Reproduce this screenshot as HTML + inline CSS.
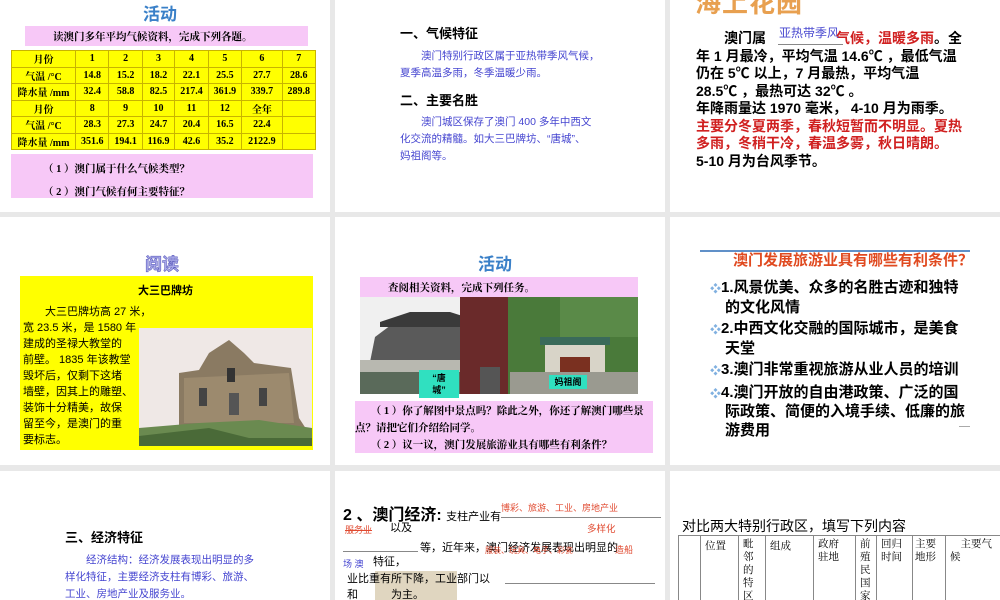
<!DOCTYPE html>
<html><head><meta charset="utf-8"><style>
*{margin:0;padding:0;box-sizing:border-box}
body{width:1000px;height:600px;background:#e8e8e8;position:relative;overflow:hidden;font-family:"Liberation Sans","Noto Sans CJK SC",sans-serif}
.p{position:absolute;background:#fff;overflow:hidden}
.a{position:absolute;white-space:nowrap}
.serif{font-family:"Liberation Serif","Noto Serif CJK SC",serif}
table.t{position:absolute;border-collapse:collapse;background:#ffff00;font-family:"Liberation Serif","Noto Serif CJK SC",serif;font-weight:bold;font-size:10px}
table.t td{border:1px solid #c8b400;height:16.5px;text-align:center;padding:0}
.blue{color:#4545d0}
.red{color:#d02020}
</style></head><body>

<!-- Row1 Panel1 -->
<div class="p" style="left:0;top:0;width:330px;height:212px">
 <div class="a" style="left:143px;top:0;font-size:17px;color:#3a80c8;font-weight:bold">活动</div>
 <div class="a serif" style="left:25px;top:26px;width:283px;height:20px;background:#f7c8f7;font-size:10.5px;font-weight:bold;padding:3px 0 0 28px">读澳门多年平均气候资料，完成下列各题。</div>
 <table class="t" style="left:11px;top:50px;width:305px">
  <tr><td style="width:64px">月份</td><td>1</td><td>2</td><td>3</td><td>4</td><td>5</td><td>6</td><td>7</td></tr>
  <tr><td>气温 /°C</td><td>14.8</td><td>15.2</td><td>18.2</td><td>22.1</td><td>25.5</td><td>27.7</td><td>28.6</td></tr>
  <tr><td>降水量 /mm</td><td>32.4</td><td>58.8</td><td>82.5</td><td>217.4</td><td>361.9</td><td>339.7</td><td>289.8</td></tr>
  <tr><td>月份</td><td>8</td><td>9</td><td>10</td><td>11</td><td>12</td><td>全年</td><td></td></tr>
  <tr><td>气温 /°C</td><td>28.3</td><td>27.3</td><td>24.7</td><td>20.4</td><td>16.5</td><td>22.4</td><td></td></tr>
  <tr><td>降水量 /mm</td><td>351.6</td><td>194.1</td><td>116.9</td><td>42.6</td><td>35.2</td><td>2122.9</td><td></td></tr>
 </table>
 <div class="a serif" style="left:11px;top:154px;width:302px;height:44px;background:#f7c8f7;font-size:10.5px;font-weight:bold;padding:4px 0 0 32px;line-height:23px">（ 1 ）澳门属于什么气候类型？<br>（ 2 ）澳门气候有何主要特征？</div>
</div>

<!-- Row1 Panel2 -->
<div class="p" style="left:335px;top:0;width:330px;height:212px">
 <div class="a" style="left:65px;top:23px;font-size:13px;font-weight:bold">一、气候特征</div>
 <div class="a blue" style="left:65px;top:48px;font-size:10.5px;line-height:17px">　　澳门特别行政区属于亚热带季风气候，<br>夏季高温多雨，冬季温暖少雨。</div>
 <div class="a" style="left:65px;top:90px;font-size:13px;font-weight:bold">二、主要名胜</div>
 <div class="a blue" style="left:65px;top:114px;font-size:10.5px;line-height:17px">　　澳门城区保存了澳门 400 多年中西文<br>化交流的精髓。如大三巴牌坊、“唐城”、<br>妈祖阁等。</div>
</div>

<!-- Row1 Panel3 -->
<div class="p" style="left:670px;top:0;width:330px;height:212px">
 <div class="a" style="left:25px;top:-17px;font-size:26px;font-weight:bold;color:#e8a050;letter-spacing:1px">海上花园</div>
 <div class="a" style="left:109px;top:24px;font-size:12px;color:#4a4ad0">亚热带季风</div>
 <div class="a" style="left:108px;top:44px;width:65px;border-top:1px solid #888"></div>
 <div class="a" style="left:26px;top:30px;font-size:14px;font-weight:bold;line-height:17.5px">　　澳门属　　　　　<span class="red">气候，温暖多雨</span>。全<br>年 1 月最冷，平均气温 14.6℃ ，最低气温<br>仍在 5℃ 以上，7 月最热，平均气温<br>28.5℃ ，最热可达 32℃ 。<br>年降雨量达 1970 毫米， 4-10 月为雨季。<br><span class="red">主要分冬夏两季，春秋短暂而不明显。夏热<br>多雨，冬稍干冷，春温多雾，秋日晴朗。</span><br>5-10 月为台风季节。</div>
</div>

<!-- Row2 Panel1 -->
<div class="p" style="left:0;top:217px;width:330px;height:248px">
 <div class="a" style="left:145px;top:33px;font-size:17px;font-weight:bold;color:#a8a8e8;-webkit-text-stroke:0.6px #6060c0">阅读</div>
 <div class="a" style="left:20px;top:59px;width:293px;height:174px;background:#ffff00"></div>
 <div class="a" style="left:138px;top:65px;font-size:11px;font-weight:bold">大三巴牌坊</div>
 <div class="a" style="left:23px;top:87px;font-size:11px;line-height:16px">　　大三巴牌坊高 27 米，<br>宽 23.5 米，是 1580 年<br>建成的圣禄大教堂的<br>前壁。 1835 年该教堂<br>毁坏后，仅剩下这堵<br>墙壁，因其上的雕塑、<br>装饰十分精美，故保<br>留至今，是澳门的重<br>要标志。</div>
 <div class="a" style="left:139px;top:111px;width:173px;height:118px;background:#efe8e6">
  <svg width="173" height="118" viewBox="0 0 173 118">
   <polygon points="40,118 40,45 60,42 70,25 90,12 105,25 115,35 152,40 160,90 173,110 173,118" fill="#8a7a62"/>
   <polygon points="45,50 150,45 155,95 45,95" fill="#9c8a6e"/>
   <rect x="88" y="40" width="8" height="14" fill="#333"/>
   <rect x="60" y="60" width="8" height="18" fill="#444"/><rect x="120" y="60" width="8" height="18" fill="#444"/>
   <rect x="90" y="65" width="10" height="22" fill="#555"/>
   <polygon points="0,118 0,100 60,95 120,92 173,100 173,118" fill="#6a8a50"/>
   <polygon points="0,118 0,108 70,100 110,110 173,110 173,118" fill="#4a6a38"/>
  </svg>
 </div>
</div>

<!-- Row2 Panel2 -->
<div class="p" style="left:335px;top:217px;width:330px;height:248px">
 <div class="a" style="left:143px;top:33px;font-size:17px;font-weight:bold;color:#3a80c8">活动</div>
 <div class="a serif" style="left:25px;top:60px;width:278px;height:20px;background:#f7c8f7;font-size:10.5px;font-weight:bold;padding:3px 0 0 28px">查阅相关资料，完成下列任务。</div>
 <div class="a" style="left:25px;top:80px;width:278px;height:97px;overflow:hidden">
  <svg width="278" height="97" viewBox="0 0 278 97">
   <rect width="112" height="97" fill="#f0f0f0"/>
   <polygon points="10,65 15,40 35,25 70,20 105,25 112,30 112,75 10,75" fill="#5a5a5a"/>
   <polygon points="20,25 50,15 90,15 112,22 112,30 20,30" fill="#3a3a3a"/>
   <rect x="0" y="63" width="112" height="12" fill="#b8b8b0"/>
   <rect x="0" y="75" width="112" height="22" fill="#5a6a5a"/>
   <rect x="100" y="0" width="48" height="97" fill="#6a2a2a"/>
   <rect x="120" y="70" width="20" height="27" fill="#555"/>
   <rect x="148" y="0" width="130" height="97" fill="#4a7a3a"/>
   <rect x="200" y="0" width="78" height="40" fill="#5a8a48"/>
   <rect x="180" y="40" width="70" height="8" fill="#3a6a5a"/>
   <rect x="185" y="48" width="60" height="49" fill="#d8d4c8"/>
   <rect x="200" y="60" width="30" height="37" fill="#7a3020"/>
   <rect x="150" y="75" width="128" height="22" fill="#9a9a90"/>
  </svg>
 </div>
 <div class="a" style="left:84px;top:153px;width:40px;height:28px;background:#30e0c0;font-size:9px;font-weight:bold;text-align:center;line-height:12px;padding-top:2px">“唐<br>城”</div>
 <div class="a" style="left:214px;top:158px;width:38px;height:14px;background:#30e0c0;font-size:9px;font-weight:bold;text-align:center;line-height:14px">妈祖阁</div>
 <div class="a serif" style="left:20px;top:184px;width:298px;height:52px;background:#f7c8f7;font-size:10.5px;font-weight:bold;line-height:17px;padding-top:2px;white-space:normal">　　（ 1 ）你了解图中景点吗？除此之外，你还了解澳门哪些景点？请把它们介绍给同学。<br>　　（ 2 ）议一议，澳门发展旅游业具有哪些有利条件？</div>
</div>

<!-- Row2 Panel3 -->
<div class="p" style="left:670px;top:217px;width:330px;height:248px">
 <div class="a" style="left:30px;top:33px;width:270px;border-top:2px solid #6090c8"></div>
 <div class="a" style="left:63px;top:32px;font-size:15px;font-weight:bold;color:#e04a20">澳门发展旅游业具有哪些有利条件？</div>
 <div class="a" style="left:40px;top:62px;font-size:15px;font-weight:bold;line-height:18.5px">
  <span style="color:#80b0e0;font-size:11px">❖</span>1.风景优美、众多的名胜古迹和独特<br>　的文化风情<br>
  <div style="height:3px"></div><span style="color:#80b0e0;font-size:11px">❖</span>2.中西文化交融的国际城市，是美食<br>　天堂<br>
  <div style="height:3px"></div><span style="color:#80b0e0;font-size:11px">❖</span>3.澳门非常重视旅游从业人员的培训<br>
  <div style="height:3px"></div><span style="color:#80b0e0;font-size:11px">❖</span>4.澳门开放的自由港政策、广泛的国<br>　际政策、简便的入境手续、低廉的旅<br>　游费用</div>
 <div class="a" style="left:289px;top:209px;width:11px;border-top:1px solid #aaa"></div>
</div>

<!-- Row3 Panel1 -->
<div class="p" style="left:0;top:471px;width:330px;height:129px">
 <div class="a" style="left:65px;top:56px;font-size:13px;font-weight:bold">三、经济特征</div>
 <div class="a blue" style="left:65px;top:81px;font-size:10.5px;line-height:17px">　　经济结构：经济发展表现出明显的多<br>样化特征，主要经济支柱有博彩、旅游、<br>工业、房地产业及服务业。</div>
</div>

<!-- Row3 Panel2 -->
<div class="p" style="left:335px;top:471px;width:330px;height:129px">
 <div class="a" style="left:8px;top:30px;font-size:16px;font-weight:bold">2 、澳门经济: <span style="font-size:11px;font-weight:normal">支柱产业有</span></div>
 <div class="a" style="left:166px;top:30px;font-size:9px;color:#e04a30">博彩、旅游、工业、房地产业</div>
 <div class="a" style="left:166px;top:46px;width:160px;border-top:1px solid #888"></div>
 <div class="a" style="left:10px;top:52px;font-size:9px;color:#e04a30;text-decoration:line-through">服务业</div>
 <div class="a" style="left:55px;top:48px;font-size:11px">以及</div>
 <div class="a" style="left:252px;top:50px;font-size:9.5px;color:#e04a30">多样化</div>
 <div class="a" style="left:8px;top:80px;width:75px;border-top:1px solid #888"></div>
 <div class="a" style="left:85px;top:68px;font-size:11px">等，近年来，澳门经济发展表现出明显的</div>
 <div class="a" style="left:150px;top:74px;font-size:8px;color:#e04a30">服装、玩具、电子、彩瓷</div>
 <div class="a" style="left:280px;top:72px;font-size:9px;color:#e04a30">造船</div>
 <div class="a" style="left:8px;top:86px;font-size:9px;color:#4545d0">场 澳</div>
 <div class="a" style="left:38px;top:82px;font-size:11px">特征，</div>
 <div class="a" style="left:40px;top:100px;width:82px;height:29px;background:#d8ccb0;opacity:.8"></div>
 <div class="a" style="left:12px;top:99px;font-size:11px">业比重有所下降，工业部门以</div>
 <div class="a" style="left:170px;top:112px;width:150px;border-top:1px solid #888"></div>
 <div class="a" style="left:12px;top:115px;font-size:11px">和　　　为主。</div>
</div>

<!-- Row3 Panel3 -->
<div class="p" style="left:670px;top:471px;width:330px;height:129px">
 <div class="a" style="left:12px;top:45px;font-size:14px">对比两大特别行政区，填写下列内容</div>
 <div class="a" style="left:8px;top:64px;width:330px;height:70px;border:1px solid #888;border-right:none"></div>
 <div class="a" style="left:30px;top:64px;height:70px;border-left:1px solid #888"></div>
 <div class="a" style="left:68px;top:64px;height:70px;border-left:1px solid #888"></div>
 <div class="a" style="left:95px;top:64px;height:70px;border-left:1px solid #888"></div>
 <div class="a" style="left:143px;top:64px;height:70px;border-left:1px solid #888"></div>
 <div class="a" style="left:185px;top:64px;height:70px;border-left:1px solid #888"></div>
 <div class="a" style="left:206px;top:64px;height:70px;border-left:1px solid #888"></div>
 <div class="a" style="left:242px;top:64px;height:70px;border-left:1px solid #888"></div>
 <div class="a" style="left:275px;top:64px;height:70px;border-left:1px solid #888"></div>
 <div class="a serif" style="left:35px;top:67px;font-size:10.5px">位置</div>
 <div class="a serif" style="left:73px;top:67px;font-size:10.5px;line-height:13px">毗<br>邻<br>的<br>特<br>区</div>
 <div class="a serif" style="left:100px;top:67px;font-size:10.5px">组成</div>
 <div class="a serif" style="left:148px;top:67px;font-size:10.5px;line-height:13px">政府<br>驻地</div>
 <div class="a serif" style="left:190px;top:67px;font-size:10.5px;line-height:13px">前<br>殖<br>民<br>国<br>家</div>
 <div class="a serif" style="left:211px;top:67px;font-size:10.5px;line-height:13px">回归<br>时间</div>
 <div class="a serif" style="left:245px;top:67px;font-size:10.5px;line-height:13px">主要<br>地形</div>
 <div class="a serif" style="left:280px;top:67px;font-size:10.5px;line-height:13px">　主要气<br>候</div>
</div>

</body></html>
